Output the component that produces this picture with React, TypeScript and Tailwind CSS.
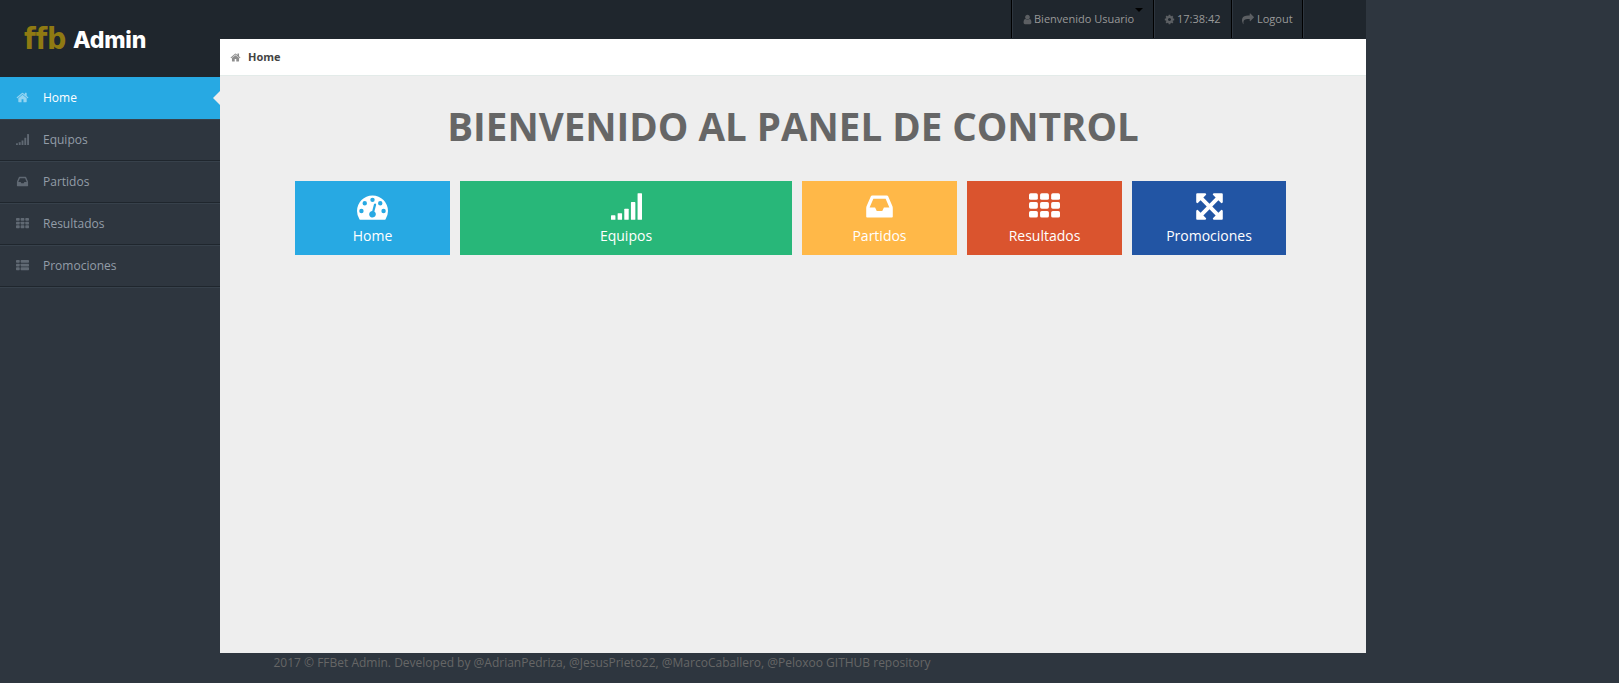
import React from "react";

type IconProps = { className?: string };

const Icon = ({ className = "", children }: IconProps & { children: React.ReactNode }) => (
  <svg viewBox="0 0 1792 1792" fill="currentColor" className={`shrink-0 overflow-visible ${className}`}>
    {children}
  </svg>
);

const HomeIcon = (p: IconProps) => (
  <Icon {...p}>
    <path d="M1472 992v480q0 26-19 45t-45 19h-384v-384h-256v384h-384q-26 0-45-19t-19-45v-480q0-1 .5-3t.5-3l575-474 575 474q1 2 1 6zm223-69l-62 74q-8 9-21 11h-3q-13 0-21-7l-692-577-692 577q-12 8-24 7-13-2-21-11l-62-74q-8-10-7-23.5t11-21.5l719-599q32-26 76-26t76 26l244 204v-195q0-14 9-23t23-9h192q14 0 23 9t9 23v408l219 182q10 8 11 21.5t-7 23.5z" />
  </Icon>
);

const SignalIcon = (p: IconProps) => (
  <Icon {...p}>
    <rect x="0" y="1408" width="256" height="256" rx="32" />
    <rect x="384" y="1280" width="256" height="384" rx="32" />
    <rect x="768" y="1024" width="256" height="640" rx="32" />
    <rect x="1152" y="640" width="256" height="1024" rx="32" />
    <rect x="1536" y="128" width="256" height="1536" rx="32" />
  </Icon>
);

const InboxIcon = (p: IconProps) => (
  <Icon {...p}>
    <path d="M1151 960h316q-1-3-2.5-8t-2.5-8l-212-496h-708l-212 496q-1 2-2.5 8t-2.5 8h316l95 192h320zm513 30v482q0 26-19 45t-45 19h-1408q-26 0-45-19t-19-45v-482q0-62 25-123l238-552q10-25 36.5-42t52.5-17h832q26 0 52.5 17t36.5 42l238 552q25 61 25 123z" />
  </Icon>
);

const ROWS = [128, 640, 1152];

const GridIcon = (p: IconProps) => (
  <Icon {...p}>
    {ROWS.map((y) =>
      [0, 640, 1280].map((x) => <rect key={`${x}-${y}`} x={x} y={y} width="512" height="384" rx="96" />)
    )}
  </Icon>
);

const ListIcon = (p: IconProps) => (
  <Icon {...p}>
    {ROWS.map((y) => (
      <React.Fragment key={y}>
        <rect x="0" y={y} width="512" height="384" rx="96" />
        <rect x="640" y={y} width="1152" height="384" rx="96" />
      </React.Fragment>
    ))}
  </Icon>
);

const UserIcon = (p: IconProps) => (
  <Icon {...p}>
    <path d="M1536 1399q0 109-62.5 187t-150.5 78h-854q-88 0-150.5-78t-62.5-187q0-85 8.5-160.5t31.5-152 58.5-131 94-89 134.5-34.5q131 128 313 128t313-128q76 0 134.5 34.5t94 89 58.5 131 31.5 152 8.5 160.5zm-256-887q0 159-112.5 271.5t-271.5 112.5-271.5-112.5-112.5-271.5 112.5-271.5 271.5-112.5 271.5 112.5 112.5 271.5z" />
  </Icon>
);

const CogIcon = (p: IconProps) => (
  <Icon {...p}>
    <path d="M1152 896q0-106-75-181t-181-75-181 75-75 181 75 181 181 75 181-75 75-181zm512-109v222q0 12-8 23t-20 13l-185 28q-19 54-39 91 35 50 107 138 10 12 10 25t-9 23q-27 37-99 108t-94 71q-12 0-26-9l-138-108q-44 23-91 38-16 136-29 186-7 28-36 28h-222q-14 0-24.5-8.5t-11.5-21.5l-28-184q-49-16-90-37l-141 107q-10 9-25 9-14 0-25-11-126-114-165-168-7-10-7-23 0-12 8-23 15-21 51-66.5t54-70.5q-27-50-41-99l-183-27q-13-2-21-12.5t-8-23.5v-222q0-12 8-23t19-13l186-28q14-46 39-92-40-57-107-138-10-12-10-24 0-10 9-23 26-36 98.5-107.5t94.5-71.5q13 0 26 10l138 107q44-23 91-38 16-136 29-186 7-28 36-28h222q14 0 24.5 8.5t11.5 21.5l28 184q49 16 90 37l142-107q9-9 24-9 13 0 25 10 129 119 165 170 7 8 7 22 0 12-8 23-15 21-51 66.5t-54 70.5q26 50 41 98l183 28q13 2 21 12.5t8 23.5z" />
  </Icon>
);

const ShareIcon = (p: IconProps) => (
  <Icon {...p}>
    <path d="M1792 640q0 26-19 45l-512 512q-19 19-45 19t-45-19-19-45v-256h-224q-98 0-175.5 6t-154 21.5-133 42.5-105.5 69.5-80 101-48.5 138.5-17.5 181q0 55 5 123 0 6 2.5 23.5t2.5 26.5q0 15-8.5 25t-23.5 10q-16 0-28-17-7-9-13-22t-13.5-30-10.5-24q-127-285-127-451 0-199 53-333 162-403 875-403h224v-256q0-26 19-45t45-19 45 19l512 512q19 19 19 45z" />
  </Icon>
);

const ExpandIcon = (p: IconProps) => (
  <Icon {...p}>
    <path d="M1411 541l-355 355 355 355 144-144q29-31 70-14 39 17 39 59v448q0 26-19 45t-45 19h-448q-42 0-59-40-17-39 14-69l144-144-355-355-355 355 144 144q31 30 14 69-17 40-59 40h-448q-26 0-45-19t-19-45v-448q0-42 40-59 39-17 69 14l144 144 355-355-355-355-144 144q-19 19-45 19-12 0-24-5-40-17-40-59v-448q0-26 19-45t45-19h448q42 0 59 40 17 39-14 69l-144 144 355 355 355-355-144-144q-31-30-14-69 17-40 59-40h448q26 0 45 19t19 45v448q0 42-39 59-13 5-25 5-26 0-45-19z" />
  </Icon>
);

const DOT = "a128 128 0 1 0 256 0a128 128 0 1 0-256 0z";

const GaugeIcon = (p: IconProps) => (
  <Icon {...p}>
    <path
      fillRule="evenodd"
      d={`M128 1152${DOT}M320 704${DOT}M768 512${DOT}M1216 704${DOT}M1408 1152${DOT}M1004 1185l101-382q6-26-7.5-48.5t-38.5-29.5-48 6.5-30 39.5l-101 382q-60 5-107 43.5t-63 98.5q-20 77 20 146t117 89 146-20 89-117q16-60-6-117t-72-91zM1792 1152q0 261-141 483-19 29-54 29h-1402q-35 0-54-29-141-221-141-483 0-182 71-348t191-286 286-191 348-71 348 71 286 191 191 286 71 348z`}
    />
  </Icon>
);

const MENU = [
  { label: "Equipos", icon: SignalIcon },
  { label: "Partidos", icon: InboxIcon },
  { label: "Resultados", icon: GridIcon },
  { label: "Promociones", icon: ListIcon },
];

const TILES = [
  { label: "Home", icon: GaugeIcon, style: "w-[155px] bg-[#27a9e3]" },
  { label: "Equipos", icon: SignalIcon, style: "w-[332px] bg-[#28b779]" },
  { label: "Partidos", icon: InboxIcon, style: "w-[155px] bg-[#ffb848]" },
  { label: "Resultados", icon: GridIcon, style: "w-[155px] bg-[#da542e]" },
  { label: "Promociones", icon: ExpandIcon, style: "w-[154px] bg-[#2255a4]" },
];

const Sidebar = () => (
  <aside className="w-[220px] shrink-0">
    <div className="flex h-[77px] items-center bg-[#1f262d] pl-[24px]">
      <span className="w-[49px] font-['DejaVu_Sans_Condensed','DejaVu_Sans',sans-serif] text-[30px] leading-none font-bold tracking-[-0.2px] text-[#8f7a12] [font-stretch:condensed]">
        ffb
      </span>
      <span className="pt-[3px] font-['Inter',sans-serif] text-[23px] leading-none font-extrabold tracking-[-0.2px] text-white">
        Admin
      </span>
    </div>
    <nav className="text-[12px]">
      <a className="flex h-[42px] items-center bg-[#27a9e3] pl-[16px] text-white">
        <HomeIcon className="mb-[2px] size-[13px] opacity-50" />
        <span className="ml-[14px] flex-1">Home</span>
        <svg viewBox="0 0 7 14" className="h-[14px] w-[7px] fill-[#eeeeee]">
          <path d="M7 0v14L0 7z" />
        </svg>
      </a>
      {MENU.map(({ label, icon: Glyph }) => (
        <a
          key={label}
          className="flex h-[42px] items-center border-t border-b border-t-[#37414b] border-b-[#1f262d] pl-[16px] text-[#939da8]"
        >
          <Glyph className="mb-px size-[13px] opacity-50" />
          <span className="ml-[14px]">{label}</span>
        </a>
      ))}
      <div className="h-px bg-[#37414b]" />
    </nav>
  </aside>
);

const Header = () => (
  <header className="flex h-[39px] bg-[#1f262d] pl-[791px] text-[11px] text-[#999999]">
    <a className="flex h-[38px] w-[142px] items-center border-l border-black shadow-[inset_1px_0_0_#2e363f] pl-[10px]">
      <UserIcon className="mr-px size-[11px] opacity-50" />
      <span>Bienvenido Usuario</span>
      <span className="mb-[18px] ml-px border-x-4 border-t-4 border-x-transparent border-t-black" />
    </a>
    <a className="flex h-[38px] w-[78px] items-center border-l border-black shadow-[inset_1px_0_0_#2e363f] pl-[10px]">
      <CogIcon className="mr-[2px] size-[11px] opacity-50" />
      <span>17:38:42</span>
    </a>
    <a className="flex h-[38px] w-[71px] items-center border-l border-black shadow-[inset_1px_0_0_#2e363f] pl-[10px]">
      <ShareIcon className="mr-[3px] size-[12px] opacity-50" />
      <span>Logout</span>
    </a>
    <span className="h-[38px] w-[2px] border-l border-black bg-[#2e363f]" />
  </header>
);

export default function App() {
  return (
    <div className="flex h-[683px] w-full overflow-hidden bg-[#2e363f] font-['Open_Sans',sans-serif] whitespace-nowrap">
      <Sidebar />
      <div className="w-[1146px] shrink-0">
        <Header />
        <div className="flex h-[37px] items-center border-b border-[#e3ebe9] bg-white pl-[10px] text-[11px] font-bold text-[#444444]">
          <HomeIcon className="mr-[7px] size-[11px] opacity-60" />
          <span>Home</span>
        </div>
        <main className="h-[577px] bg-[#eeeeee] pt-[30px]">
          <h1 className="text-center text-[38.5px] leading-[40px] font-bold text-[#666666]">
            BIENVENIDO AL PANEL DE CONTROL
          </h1>
          <div className="mt-[35px] flex gap-[10px] pl-[75px]">
            {TILES.map(({ label, icon: Glyph, style }) => (
              <a key={label} className={`flex h-[74px] flex-col items-center pt-[10px] text-[14px] text-white ${style}`}>
                <Glyph className="size-[31px]" />
                <span className="mt-[4px] leading-[20px]">{label}</span>
              </a>
            ))}
          </div>
        </main>
        <footer className="pl-[53.5px] text-[12px] leading-[20px] text-[#666666]">
          2017 © FFBet Admin. Developed by @AdrianPedriza, @JesusPrieto22, @MarcoCaballero, @Peloxoo GITHUB repository
        </footer>
      </div>
    </div>
  );
}
